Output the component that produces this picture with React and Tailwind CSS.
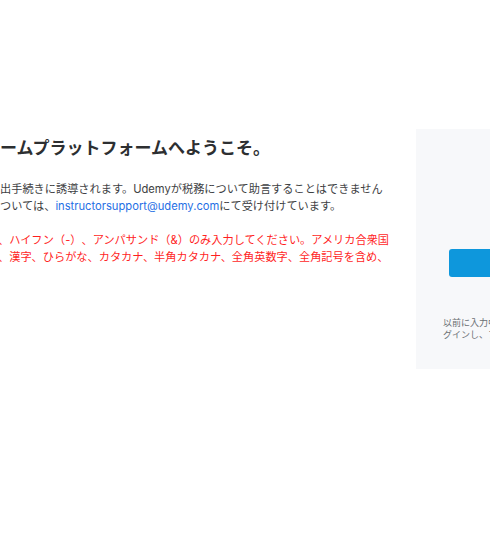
import React from "react";

const jp = { fontFamily: 'Inter, "Noto Sans CJK JP", sans-serif' };

const App = () => {
  return (
    <div
      className="w-[490px] h-[550px] overflow-hidden bg-white [text-spacing-trim:space-all]"
      style={jp}
    >
      <div className="flex items-start pt-[129px]">

        {/* LEFT: intro text (cropped on the left edge) */}
        <div className="w-[416px] shrink-0 whitespace-nowrap">
          <h1 className="mt-[7px] text-[17px] leading-[24px] font-bold text-[#2d2f31]">
            ームプラットフォームへようこそ。
          </h1>

          <p className="mt-[21px] text-[11.2px] leading-[17px] text-[#3e4143]">
            出手続きに誘導されます。Udemyが税務について助言することはできません
            <br />
            ついては、
            <a href="#" className="text-[#1f6fe5]">instructorsupport@udemy.com</a>
            にて受け付けています。
          </p>

          <p className="-ml-[2px] mt-[17px] text-[11.2px] leading-[17px] text-[#ff1f1f]">
            、ハイフン（-）、アンパサンド（&amp;）のみ入力してください。アメリカ合衆国
            <br />
            、漢字、ひらがな、カタカナ、半角カタカナ、全角英数字、全角記号を含め、
          </p>
        </div>

        {/* RIGHT: login panel (cropped on the right edge) */}
        <div className="w-[240px] h-[240px] shrink-0 bg-[#f7f8fa] pt-[120px] px-[27px]">
          <button className="ml-[6px] w-[200px] h-[28px] rounded-[3px] bg-[#0e97dc]" />

          <p className="mt-[34px] text-[9px] leading-[12px] text-[#6a6f73] whitespace-nowrap">
            以前に入力中の情報がある場合はロ
            <br />
            グインし、フォームを再開してください。
          </p>
        </div>

      </div>
    </div>
  );
};

export default App;
